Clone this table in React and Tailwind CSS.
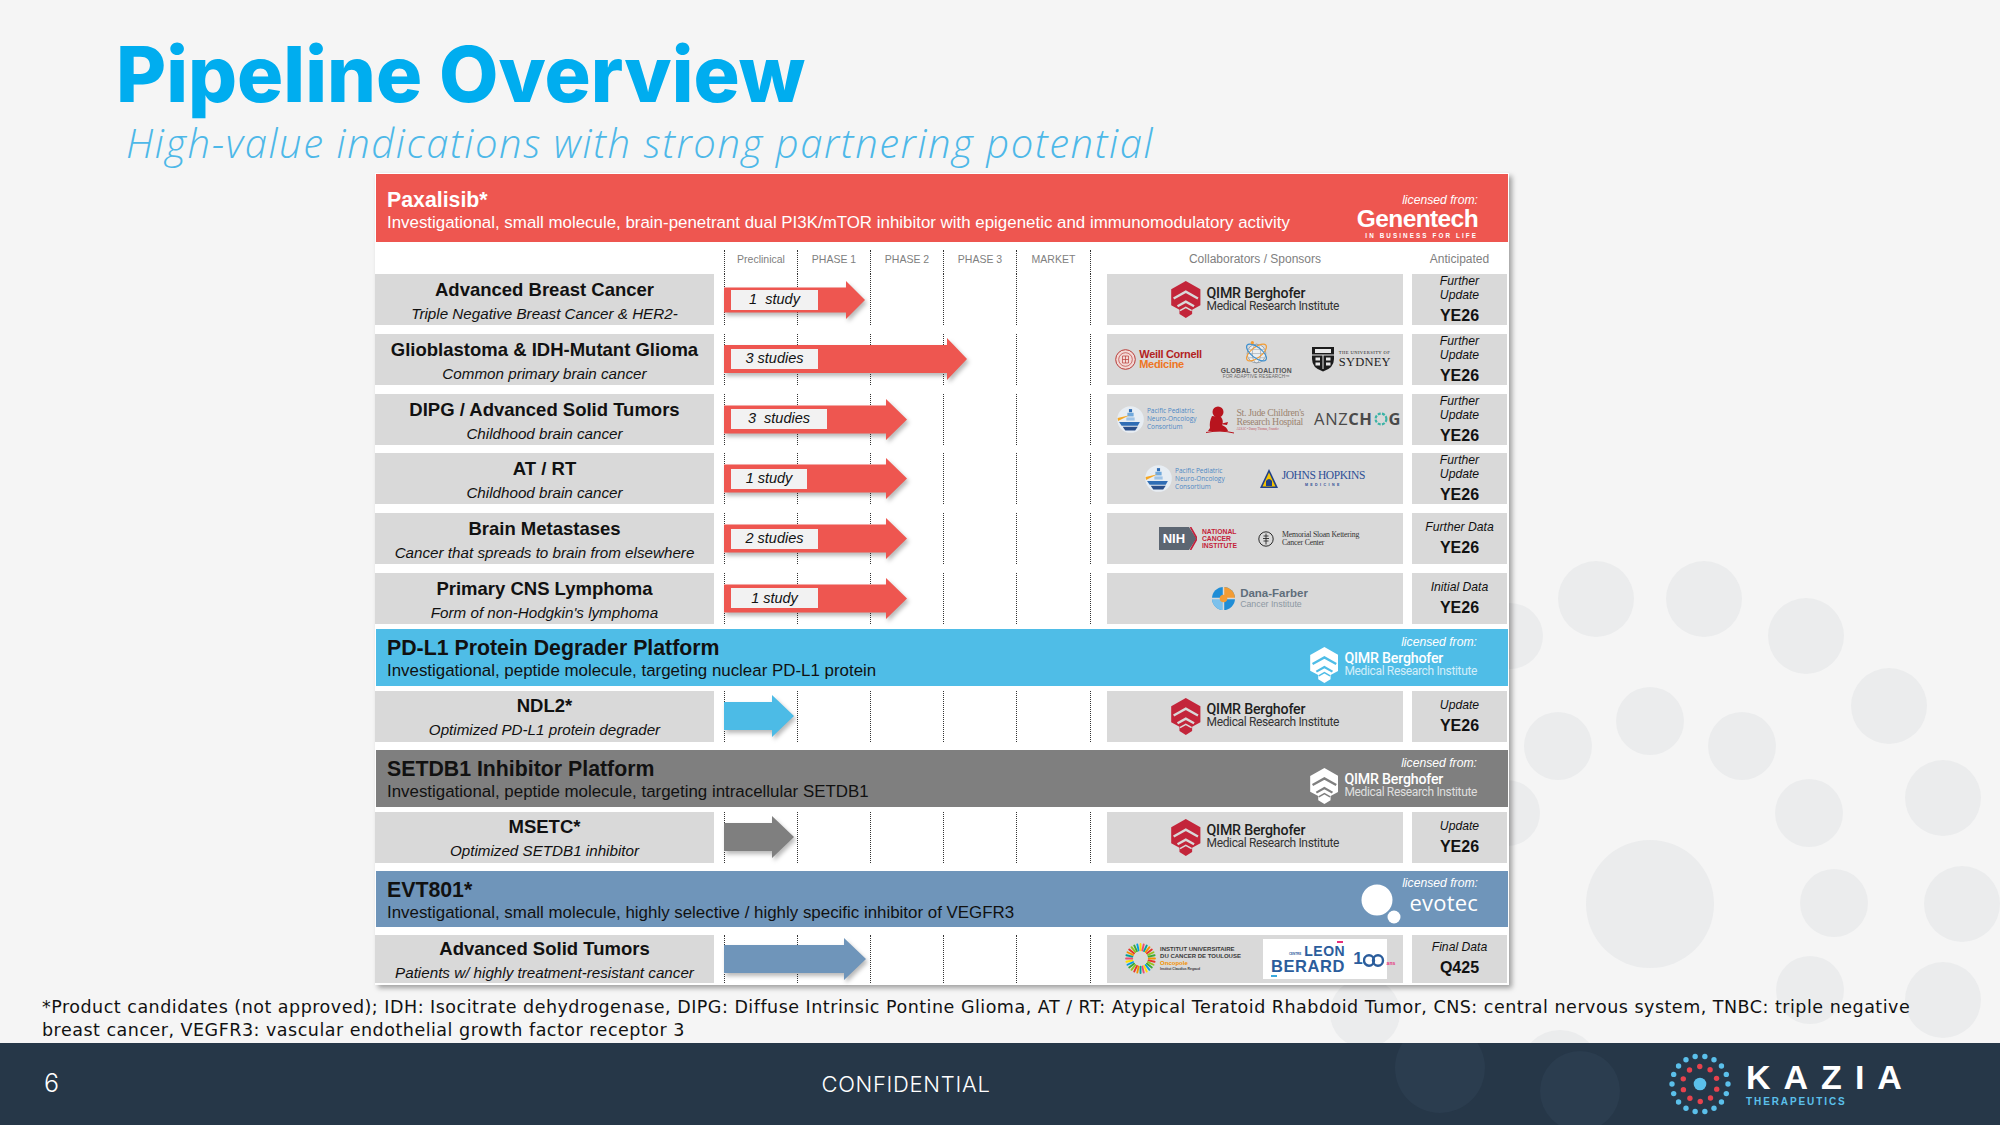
import React from 'react'

const sans = "font-['Liberation_Sans',Arial,sans-serif]"

// faint background circles on the right side of the slide
const dots = [
  'left-[1558px] top-[561px] w-[76px] h-[76px]',
  'left-[1666px] top-[561px] w-[76px] h-[76px]',
  'left-[1768px] top-[598px] w-[76px] h-[76px]',
  'left-[1851px] top-[668px] w-[76px] h-[76px]',
  'left-[1905px] top-[760px] w-[76px] h-[76px]',
  'left-[1924px] top-[866px] w-[76px] h-[76px]',
  'left-[1524px] top-[712px] w-[68px] h-[68px]',
  'left-[1616px] top-[687px] w-[68px] h-[68px]',
  'left-[1708px] top-[712px] w-[68px] h-[68px]',
  'left-[1775px] top-[779px] w-[68px] h-[68px]',
  'left-[1800px] top-[869px] w-[68px] h-[68px]',
  'left-[1586px] top-[840px] w-[128px] h-[128px]',
  'left-[1477px] top-[603px] w-[66px] h-[66px]',
  'left-[1474px] top-[780px] w-[66px] h-[66px]',
  'left-[1776px] top-[956px] w-[68px] h-[68px]',
  'left-[1905px] top-[962px] w-[76px] h-[76px]',
  'left-[1330px] top-[978px] w-[70px] h-[70px]',
  'left-[1520px] top-[1030px] w-[80px] h-[80px]',
]

function QimrIcon({ fill, line, h = 37 }) {
  return (
    <svg width={h * 0.8} height={h} viewBox="0 0 30 38">
      <path d="M15 0 L30 8.5 V25 L21.5 29.5 V34 L15 38 L8.5 34 V29.5 L0 25 V8.5 Z" fill={fill} />
      <path d="M2.5 18 L15 11 L27.5 18" stroke={line} strokeWidth="2.4" fill="none" />
      <path d="M6.5 26 L15 21.2 L23.5 26" stroke={line} strokeWidth="2.4" fill="none" />
      <path d="M9 30.5 L15 27 L21 30.5" stroke={line} strokeWidth="1.6" fill="none" />
    </svg>
  )
}

function QimrLogo({ white, line = '#d9d9d9' }) {
  return (
    <div className="flex items-center gap-[6px]">
      <QimrIcon fill={white ? '#ffffff' : '#c3253a'} line={line} h={white ? 36 : 37} />
      <div className="flex flex-col font-['Roboto',sans-serif] leading-[13px]">
        <span className={`text-[14.2px] font-medium tracking-[-0.2px] ${white ? 'text-white' : 'text-[#1e1e1e]'}`}>QIMR Berghofer</span>
        <span className={`text-[12px] tracking-[-0.35px] ${white ? 'text-white/75' : 'text-[#333]'}`}>Medical Research Institute</span>
      </div>
    </div>
  )
}

function WeillLogo() {
  return (
    <div className="flex items-center gap-[3px]">
      <svg width="21" height="21" viewBox="0 0 21 21">
        <circle cx="10.5" cy="10.5" r="9.8" fill="#f3d9d6" stroke="#b83a36" strokeWidth="1" />
        <circle cx="10.5" cy="10.5" r="6.8" fill="none" stroke="#b83a36" strokeWidth="0.7" />
        <path d="M7.5 7 H13.5 V14 H7.5 Z M10.5 7 V14 M7.5 10.5 H13.5" stroke="#b83a36" strokeWidth="0.7" fill="none" />
      </svg>
      <div className={`flex flex-col ${sans} text-[11px] font-bold leading-[10.5px] tracking-[-0.3px]`}>
        <span className="text-[#b3231f]">Weill Cornell</span>
        <span className="text-[#ee7623]">Medicine</span>
      </div>
    </div>
  )
}

function GlobalLogo() {
  return (
    <div className={`flex flex-col items-center ${sans}`}>
      <svg width="27" height="27" viewBox="0 0 26 26">
        <circle cx="13" cy="14" r="9" fill="#eceef0" stroke="#8f99a3" strokeWidth="0.8" />
        <ellipse cx="13" cy="14" rx="4" ry="9" fill="none" stroke="#8f99a3" strokeWidth="0.6" />
        <path d="M4 14 H22 M5.5 10 H20.5 M5.5 18 H20.5" stroke="#8f99a3" strokeWidth="0.5" />
        <ellipse cx="13" cy="13" rx="11.5" ry="5" transform="rotate(-38 13 13)" fill="none" stroke="#f39c34" strokeWidth="1.1" />
        <ellipse cx="13" cy="13" rx="11.5" ry="5" transform="rotate(38 13 13)" fill="none" stroke="#3b8fd0" strokeWidth="1.1" />
        <circle cx="9" cy="3.5" r="1.6" fill="#f39c34" />
      </svg>
      <span className="mt-[1px] text-[6.8px] font-bold leading-[7px] tracking-[0.2px] text-[#555]">GLOBAL COALITION</span>
      <span className="text-[4.6px] leading-[5px] tracking-[0.1px] text-[#666]">FOR ADAPTIVE RESEARCH™</span>
    </div>
  )
}

function SydneyLogo() {
  return (
    <div className="flex items-center gap-[4px]">
      <svg width="24" height="26" viewBox="0 0 24 26">
        <path d="M1 1 H23 V13 Q23 22 12 25.5 Q1 22 1 13 Z" fill="#1c1c1c" />
        <path d="M4 3 H20 V7 H4 Z" fill="#e8e8e8" />
        <path d="M1 9 H23 M12 9 V23" stroke="#e8e8e8" strokeWidth="1" />
        <rect x="4.5" y="11.5" width="4.5" height="3" fill="#e8e8e8" />
        <rect x="15" y="11.5" width="4.5" height="3" fill="#e8e8e8" />
        <rect x="4.5" y="16.5" width="4.5" height="3" fill="#e8e8e8" />
        <rect x="15" y="16.5" width="4.5" height="3" fill="#e8e8e8" />
      </svg>
      <div className="flex flex-col font-['Liberation_Serif',serif] text-[#222]">
        <span className="text-[4.6px] leading-[6px] tracking-[0.4px]">THE UNIVERSITY OF</span>
        <span className="text-[12.5px] leading-[12px] tracking-[0.2px]">SYDNEY</span>
      </div>
    </div>
  )
}

function PpnocLogo() {
  return (
    <div className="flex items-center gap-[3px]">
      <svg width="27" height="27" viewBox="0 0 26 26">
        <circle cx="13" cy="13" r="12.8" fill="#e7edf3" />
        <path d="M11.5 3 H14.5 V6 H11.5 Z" fill="#2f6db5" />
        <path d="M10 6.5 H16 V10 H10 Z" fill="#6fa8dc" />
        <path d="M12 9 L0.6 11.5 L1 14.5 Z" fill="#f5a623" />
        <path d="M9 11 H17 V14 H9 Z" fill="#9fc3e6" />
        <path d="M2 15.5 H22 L20 19 H4.5 Z" fill="#2f6db5" />
        <path d="M5.5 20 H20 L17.5 23.5 H8 Z" fill="#2a4f8a" />
      </svg>
      <div className="flex flex-col font-['Open_Sans',sans-serif] text-[6.5px] leading-[7.8px] text-[#4d88c4]">
        <span>Pacific Pediatric</span>
        <span>Neuro-Oncology</span>
        <span>Consortium</span>
      </div>
    </div>
  )
}

function StJudeLogo() {
  return (
    <div className="flex items-center">
      <svg width="30" height="30" viewBox="0 0 30 30">
        <circle cx="12" cy="8" r="5.5" fill="#b8141e" />
        <path d="M6 12 Q3 18 4 24 L2 27 H22 Q21 23 16 21 Q18 17 15 13 Z" fill="#b8141e" />
        <path d="M14 20 L22 18 L21 21 Z" fill="#b8141e" />
        <path d="M0 28.5 Q14 25.5 28 29" stroke="#b8141e" strokeWidth="1" fill="none" />
      </svg>
      <div className="flex flex-col font-['Liberation_Serif',serif] text-[#9b8470]">
        <span className="text-[9.8px] leading-[9px] tracking-[-0.3px]">St. Jude Children's</span>
        <span className="text-[9.8px] leading-[9px] tracking-[-0.3px]">Research Hospital</span>
        <span className="mt-[1px] text-[3px] leading-[4px] text-[#c0505a]">ALSAC • Danny Thomas, Founder</span>
      </div>
    </div>
  )
}

function AnzchogLogo() {
  return (
    <div className="flex items-center font-['Open_Sans',sans-serif] text-[16.5px] leading-none tracking-[0.6px] text-[#4a4a4a]">
      <span>ANZ</span>
      <span className="font-bold">CH</span>
      <svg width="14" height="14" viewBox="0 0 14 14" className="mx-[1px]">
        <circle cx="7" cy="7" r="5.4" fill="none" stroke="#3bb3a6" strokeWidth="2.2" strokeDasharray="3 1.3" />
      </svg>
      <span className="font-bold">G</span>
    </div>
  )
}

function HopkinsLogo() {
  return (
    <div className="flex items-center gap-[3px]">
      <svg width="20" height="22" viewBox="0 0 20 22">
        <path d="M10 1 L19 20 H1 Z" fill="#1f3f87" />
        <path d="M10 4.5 L16.5 18.5 H3.5 Z" fill="#f4c300" />
        <path d="M7 18 V13 Q10 9 13 13 V18 Z" fill="#1f3f87" />
      </svg>
      <div className="flex flex-col items-center font-['Liberation_Serif',serif] text-[#2c4f96]">
        <span className="text-[11.5px] leading-[11px] tracking-[-0.4px]">JOHNS HOPKINS</span>
        <span className={`${sans} mt-[2px] text-[3.6px] font-bold leading-[4px] tracking-[2.4px]`}>MEDICINE</span>
      </div>
    </div>
  )
}

function NihLogo() {
  return (
    <div className="flex items-center gap-[5px]">
      <div className="flex h-[23px] items-center">
        <div className={`flex h-[23px] w-[30px] items-center justify-center bg-[#5c6672] ${sans} text-[13px] font-bold text-white`}>NIH</div>
        <svg width="8" height="23" viewBox="0 0 8 23">
          <path d="M0 0 L7.5 11.5 L0 23 Z" fill="#5c6672" />
          <path d="M1.5 0 L8 11.5 L1.5 23" stroke="#c41e3a" strokeWidth="1.6" fill="none" />
        </svg>
      </div>
      <div className={`flex flex-col ${sans} text-[6.8px] font-bold leading-[7.4px] text-[#c41e3a]`}>
        <span>NATIONAL</span>
        <span>CANCER</span>
        <span>INSTITUTE</span>
      </div>
    </div>
  )
}

function MskLogo() {
  return (
    <div className="flex items-center gap-[8px]">
      <svg width="16" height="16" viewBox="0 0 16 16">
        <circle cx="8" cy="8" r="7.2" fill="none" stroke="#2a2a2a" strokeWidth="1" />
        <path d="M8 2.5 V13.5 M5.5 5 H10.5 M5 7.5 H11 M5.5 10 H10.5" stroke="#2a2a2a" strokeWidth="0.9" />
      </svg>
      <div className="flex flex-col font-['Liberation_Serif',serif] text-[7.8px] leading-[8px] tracking-[-0.2px] text-[#333]">
        <span>Memorial Sloan Kettering</span>
        <span>Cancer Center</span>
      </div>
    </div>
  )
}

function DanaLogo() {
  return (
    <div className="ml-[10px] flex items-center gap-[5px]">
      <svg width="23" height="23" viewBox="0 0 22 22">
        <circle cx="11" cy="11" r="11" fill="#1f8dd6" />
        <path d="M11 0 A11 11 0 0 1 22 11 H11 Z" fill="#f39c34" />
        <path d="M11 11 H0 A11 11 0 0 0 11 22 Z" fill="#7cc1ec" />
        <path d="M11 0 V22 M0 11 H22" stroke="#d9d9d9" strokeWidth="1.4" />
        <circle cx="11" cy="11" r="3.6" fill="#f39c34" />
      </svg>
      <div className={`flex flex-col ${sans} text-[#5f6e7b]`}>
        <span className="text-[11.5px] font-bold leading-[11px]">Dana-Farber</span>
        <span className="text-[8.8px] leading-[10px] text-[#8c98a3]">Cancer Institute</span>
      </div>
    </div>
  )
}

function IuctLogo() {
  const colors = ['#f39200', '#e6332a', '#95c11f', '#3aaa35', '#009fe3', '#ffde00', '#e94e77', '#00a19a']
  const ticks = Array.from({ length: 28 }, (_, i) => i)
  return (
    <div className="flex items-center gap-[4px]">
      <svg width="31" height="31" viewBox="0 0 30 30">
        {ticks.map((i) => {
          const a = (i / 28) * Math.PI * 2
          return (
            <line
              key={i}
              x1={15 + Math.cos(a) * 8}
              y1={15 + Math.sin(a) * 8}
              x2={15 + Math.cos(a) * 14}
              y2={15 + Math.sin(a) * 14}
              stroke={colors[i % colors.length]}
              strokeWidth="1.8"
              strokeLinecap="round"
            />
          )
        })}
      </svg>
      <div className={`flex flex-col ${sans} font-bold text-[#3a3a3a]`}>
        <span className="text-[6px] leading-[7px]">INSTITUT UNIVERSITAIRE</span>
        <span className="text-[6px] leading-[7px]">DU CANCER DE TOULOUSE</span>
        <span className="text-[6px] leading-[7px] text-[#f39200]">Oncopole</span>
        <span className="text-[3.4px] leading-[4px]">Institut Claudius Regaud</span>
      </div>
    </div>
  )
}

function BerardLogo() {
  return (
    <div className={`flex h-[40px] w-[124px] items-center bg-white pl-[8px] ${sans}`}>
      <div className="relative flex flex-col items-end font-bold text-[#2b5d9c]">
        <div className="flex items-end gap-[3px]">
          <span className="mb-[2px] text-[3px] leading-[3px]">CENTRE</span>
          <span className="text-[14px] leading-[14px] tracking-[0.5px]">LEON</span>
        </div>
        <span className="text-[16.5px] leading-[16px] tracking-[0.6px]">BERARD</span>
        <span className="absolute right-[2px] -top-[3px] h-[2px] w-[6px] bg-[#e5317c]" />
        <span className="absolute left-0 -bottom-[3px] h-[2px] w-[6px] bg-[#3aa9dd]" />
      </div>
      <div className="ml-[8px] flex items-end text-[#2b5d9c]">
        <span className="text-[17px] font-bold leading-[17px]">1</span>
        <svg width="24" height="13" viewBox="0 0 24 13">
          <ellipse cx="6" cy="6.5" rx="5" ry="5.2" fill="none" stroke="#2b5d9c" strokeWidth="2.4" />
          <ellipse cx="15" cy="6.5" rx="5" ry="5.2" fill="none" stroke="#2b5d9c" strokeWidth="2.4" />
        </svg>
        <span className="mb-[1px] text-[5px] font-bold leading-[5px] text-[#e5317c]">ans</span>
      </div>
    </div>
  )
}

function Arrow({ w, h = 41, body = 28, head = 21, color, label, lw }) {
  const t = (h - body) / 2
  const pts = `0,${t} ${w - head},${t} ${w - head},0 ${w},${h / 2} ${w - head},${h} ${w - head},${h - t} 0,${h - t}`
  return (
    <div className="relative" style={{ width: w, height: h }}>
      <svg width={w} height={h} viewBox={`0 0 ${w} ${h}`} className="drop-shadow-[2px_3px_2px_rgba(0,0,0,0.28)]">
        <polygon points={pts} fill={color} />
      </svg>
      {label && (
        <div className={`absolute left-[7px] top-1/2 flex h-[20px] -translate-y-1/2 items-center justify-center bg-[#f2f2f2] ${lw} ${sans} text-[14.5px] italic whitespace-pre text-[#111]`}>
          {label}
        </div>
      )}
    </div>
  )
}

function PhaseCells({ children }) {
  return (
    <div className="relative ml-[10px] flex w-[367px] self-stretch">
      <div className="w-[73px] border-l border-dotted border-[#333]" />
      <div className="w-[73px] border-l border-dotted border-[#333]" />
      <div className="w-[73px] border-l border-dotted border-[#333]" />
      <div className="w-[73px] border-l border-dotted border-[#333]" />
      <div className="w-[75px] border-x border-dotted border-[#333]" />
      {children}
    </div>
  )
}

function Label({ title, sub, h = 'h-[51px]', pt = 'pt-[4px]' }) {
  return (
    <div className={`flex w-[339px] shrink-0 flex-col items-center bg-[#d9d9d9] ${h} ${pt} ${sans} text-[#111]`}>
      <span className="text-[18.5px] font-bold leading-[23px]">{title}</span>
      <span className="text-[15.2px] italic leading-[25px]">{sub}</span>
    </div>
  )
}

function Anticipated({ lines, value, h = 'h-[51px]' }) {
  return (
    <div className={`ml-[9px] flex w-[95px] shrink-0 flex-col items-center justify-center bg-[#d9d9d9] ${h} ${sans} text-[#111]`}>
      {lines.map((l) => (
        <span key={l} className="text-[12.2px] italic leading-[14px]">{l}</span>
      ))}
      <span className="mt-[5px] text-[16px] font-bold leading-[18px]">{value}</span>
    </div>
  )
}

function Collab({ children, h = 'h-[51px]' }) {
  return (
    <div className={`ml-[16px] flex w-[296px] shrink-0 items-center justify-center bg-[#d9d9d9] ${h}`}>
      {children}
    </div>
  )
}

const red = '#ee5650'

const paxRows = [
  {
    title: 'Advanced Breast Cancer', sub: 'Triple Negative Breast Cancer & HER2-',
    arrow: { w: 141, h: 38, body: 25, head: 19, label: '1  study', lw: 'w-[87px]' },
    collab: <QimrLogo />, ant: ['Further', 'Update'],
  },
  {
    title: 'Glioblastoma & IDH-Mutant Glioma', sub: 'Common primary brain cancer',
    arrow: { w: 243, h: 42, body: 28, head: 20, label: '3 studies', lw: 'w-[87px]' },
    collab: (
      <div className="flex items-center gap-[19px] pr-[4px]">
        <WeillLogo />
        <GlobalLogo />
        <SydneyLogo />
      </div>
    ),
    ant: ['Further', 'Update'],
  },
  {
    title: 'DIPG / Advanced Solid Tumors', sub: 'Childhood brain cancer',
    arrow: { w: 183, label: '3  studies', lw: 'w-[96px]' },
    collab: (
      <div className="flex items-center gap-[10px] pl-[8px]">
        <PpnocLogo />
        <StJudeLogo />
        <AnzchogLogo />
      </div>
    ),
    ant: ['Further', 'Update'],
  },
  {
    title: 'AT / RT', sub: 'Childhood brain cancer',
    arrow: { w: 183, label: '1 study', lw: 'w-[76px]' },
    collab: (
      <div className="flex items-center gap-[34px]">
        <PpnocLogo />
        <HopkinsLogo />
      </div>
    ),
    ant: ['Further', 'Update'],
  },
  {
    title: 'Brain Metastases', sub: 'Cancer that spreads to brain from elsewhere',
    arrow: { w: 183, label: '2 studies', lw: 'w-[87px]' },
    collab: (
      <div className="flex items-center gap-[21px] pl-[8px]">
        <NihLogo />
        <MskLogo />
      </div>
    ),
    ant: ['Further Data'],
  },
  {
    title: 'Primary CNS Lymphoma', sub: "Form of non-Hodgkin's lymphoma",
    arrow: { w: 183, label: '1 study', lw: 'w-[87px]' },
    collab: <DanaLogo />, ant: ['Initial Data'],
  },
]

function Licensed() {
  return <span className={`${sans} text-[12.2px] italic leading-[16px] text-white`}>licensed from:</span>
}

function Bar({ color, title, sub, right, h }) {
  return (
    <div className={`mx-[1px] flex justify-between ${color} ${h} ${sans} text-[#111]`}>
      <div className="flex flex-col pl-[11px] pt-[7px]">
        <span className="text-[21.3px] font-bold leading-[24px]">{title}</span>
        <span className="text-[16.9px] leading-[22px]">{sub}</span>
      </div>
      {right}
    </div>
  )
}

function SubRow({ title, sub, color, w, collab, ant, value, h = 'h-[51px]', pt = 'pt-[3px]', head = 22 }) {
  return (
    <div className="flex">
      <Label title={title} sub={sub} h={h} pt={pt} />
      <PhaseCells>
        <div className="absolute left-0 top-0 flex h-full items-center">
          <Arrow w={w} h={42} body={28} head={head} color={color} />
        </div>
      </PhaseCells>
      <Collab h={h}>{collab}</Collab>
      <Anticipated lines={ant} value={value} h={h} />
    </div>
  )
}

function KaziaMark() {
  const outer = Array.from({ length: 18 }, (_, i) => (i / 18) * Math.PI * 2)
  const inner = Array.from({ length: 10 }, (_, i) => (i / 10) * Math.PI * 2 + 0.3)
  return (
    <svg width="64" height="64" viewBox="0 0 64 64">
      {outer.map((a, i) => (
        <circle key={'o' + i} cx={32 + Math.cos(a) * 28} cy={32 + Math.sin(a) * 28} r="2.7" fill="#5bc0eb" />
      ))}
      {inner.map((a, i) => (
        <circle key={'i' + i} cx={32 + Math.cos(a) * 17.5} cy={32 + Math.sin(a) * 17.5} r="2.7" fill="#e8424d" />
      ))}
      <circle cx="32" cy="32" r="6.3" fill="#5bc0eb" />
    </svg>
  )
}

export default function App() {
  return (
    <div className="relative flex h-[1125px] w-[2000px] flex-col overflow-hidden bg-[#f5f5f5]">
      {dots.map((d) => (
        <div key={d} className={`absolute rounded-full bg-[#ebeced] ${d}`} />
      ))}

      {/* title */}
      <div className="relative h-[173px] pl-[116px] pt-[36px]">
        <h1 className="font-['Inter',sans-serif] text-[77px] font-extrabold leading-[77px] text-[#00adef]">
          Pipeline Overview
        </h1>
        <p className="mt-[10px] pl-[10px] font-['Open_Sans',sans-serif] text-[40px] font-light italic leading-[40px] tracking-[1.6px] text-[#4db8e8]">
          High-value indications with strong partnering potential
        </p>
      </div>

      {/* pipeline table */}
      <div className="relative ml-[375px] w-[1134px] bg-white pt-[1px] pb-[2px] shadow-[3px_3px_5px_rgba(0,0,0,0.35)]">
        <div className={`mx-[1px] flex h-[68px] justify-between bg-[#ee5650] ${sans} text-white`}>
          <div className="flex flex-col pl-[11px] pt-[14px]">
            <span className="text-[21.3px] font-bold leading-[24px]">Paxalisib*</span>
            <span className="text-[16.9px] leading-[22px]">
              Investigational, small molecule, brain-penetrant dual PI3K/mTOR inhibitor with epigenetic and immunomodulatory activity
            </span>
          </div>
          <div className="flex flex-col items-end pr-[30px] pt-[18px]">
            <Licensed />
            <span className="text-[24.5px] font-bold leading-[22px] tracking-[-0.6px]">Genentech</span>
            <span className="mt-[2px] text-[6.3px] font-bold leading-[8px] tracking-[2.1px]">IN BUSINESS FOR LIFE</span>
          </div>
        </div>

        {/* column headers */}
        <div className={`flex h-[32px] ${sans} text-[#808080]`}>
          <div className="w-[339px] shrink-0" />
          <div className="ml-[10px] mt-[8px] flex w-[367px] text-[10.5px] leading-[14px]">
            <div className="w-[73px] border-l border-dotted border-[#333] pt-[2px] text-center">Preclinical</div>
            <div className="w-[73px] border-l border-dotted border-[#333] pt-[2px] text-center">PHASE 1</div>
            <div className="w-[73px] border-l border-dotted border-[#333] pt-[2px] text-center">PHASE 2</div>
            <div className="w-[73px] border-l border-dotted border-[#333] pt-[2px] text-center">PHASE 3</div>
            <div className="w-[75px] border-x border-dotted border-[#333] pt-[2px] text-center">MARKET</div>
          </div>
          <div className="ml-[16px] w-[296px] pt-[10px] text-center text-[12px] leading-[14px]">Collaborators / Sponsors</div>
          <div className="ml-[9px] w-[95px] pt-[10px] text-center text-[12px] leading-[14px]">Anticipated</div>
        </div>

        {paxRows.map((r, i) => (
          <div key={r.title} className={`flex items-start ${i < 5 ? 'pb-[8.8px]' : 'pb-[5px]'}`}>
            <Label title={r.title} sub={r.sub} />
            <PhaseCells>
              <div className="absolute left-0 top-0 flex h-[51px] items-center">
                <Arrow color={red} {...r.arrow} />
              </div>
            </PhaseCells>
            <Collab>{r.collab}</Collab>
            <Anticipated lines={r.ant} value="YE26" />
          </div>
        ))}

        {/* PD-L1 */}
        <Bar
          color="bg-[#4fbde7]"
          h="h-[57px]"
          title="PD-L1 Protein Degrader Platform"
          sub="Investigational, peptide molecule, targeting nuclear PD-L1 protein"
          right={
            <div className="flex flex-col items-end pr-[31px] pt-[5px]">
              <Licensed />
              <div className="-mt-[3px]">
                <QimrLogo white line="#4fbde7" />
              </div>
            </div>
          }
        />
        <div className="mt-[5px]">
          <SubRow
            title="NDL2*"
            sub="Optimized PD-L1 protein degrader"
            color="#4cbbe6"
            w={70}
            collab={<QimrLogo />}
            ant={['Update']}
            value="YE26"
          />
        </div>

        {/* SETDB1 */}
        <div className="mt-[8px]">
          <Bar
            color="bg-[#7f7f7f]"
            h="h-[57px]"
            title="SETDB1 Inhibitor Platform"
            sub="Investigational, peptide molecule, targeting intracellular SETDB1"
            right={
              <div className="flex flex-col items-end pr-[31px] pt-[5px]">
                <Licensed />
                <div className="-mt-[3px]">
                  <QimrLogo white line="#7f7f7f" />
                </div>
              </div>
            }
          />
        </div>
        <div className="mt-[5px]">
          <SubRow
            title="MSETC*"
            sub="Optimized SETDB1 inhibitor"
            color="#7f7f7f"
            w={70}
            collab={<QimrLogo />}
            ant={['Update']}
            value="YE26"
          />
        </div>

        {/* EVT801 */}
        <div className="mt-[8px]">
          <Bar
            color="bg-[#6f95ba]"
            h="h-[56px]"
            title="EVT801*"
            sub="Investigational, small molecule, highly selective / highly specific inhibitor of VEGFR3"
            right={
              <div className="flex flex-col items-end pr-[30px] pt-[4px]">
                <Licensed />
                <div className="-mt-[7px] flex items-center gap-[8px]">
                  <svg width="40" height="40" viewBox="0 0 40 40">
                    <circle cx="16" cy="16" r="15.5" fill="#fff" />
                    <circle cx="33" cy="33" r="6.5" fill="#fff" />
                  </svg>
                  <span className="-mt-[4px] font-['Open_Sans',sans-serif] text-[22px] leading-[22px] tracking-[0.2px] text-white">evotec</span>
                </div>
              </div>
            }
          />
        </div>
        <div className="mt-[8px]">
          <SubRow
            title="Advanced Solid Tumors"
            sub="Patients w/ highly treatment-resistant cancer"
            color="#6f95ba"
            w={142}
            h="h-[48px]"
            pt="pt-[2px]"
            collab={
              <div className="flex items-center gap-[22px] pl-[2px]">
                <IuctLogo />
                <BerardLogo />
              </div>
            }
            ant={['Final Data']}
            value="Q425"
          />
        </div>
      </div>

      {/* footnote */}
      <p className="relative ml-[42px] mt-[11px] whitespace-nowrap font-['DejaVu_Sans',sans-serif] text-[17.5px] leading-[23px] tracking-[0.5px] text-[#111]">
        *Product candidates (not approved); IDH: Isocitrate dehydrogenase, DIPG: Diffuse Intrinsic Pontine Glioma, AT / RT: Atypical Teratoid Rhabdoid Tumor, CNS: central nervous system, TNBC: triple negative
        <br />
        breast cancer, VEGFR3: vascular endothelial growth factor receptor 3
      </p>

      {/* footer */}
      <div className="relative mt-auto flex h-[82px] items-center overflow-hidden bg-[#263748] font-['Inter',sans-serif] text-white">
        <div className="absolute left-[1395px] -top-[20px] h-[90px] w-[90px] rounded-full bg-[#2b3d4f]" />
        <div className="absolute left-[1540px] top-[8px] h-[80px] w-[80px] rounded-full bg-[#2b3d4f]" />
        <div className="relative w-[778px] pl-[44px] text-[25px] font-light">6</div>
        <div className="relative w-[256px] text-center text-[22px] font-light tracking-[0.7px]">CONFIDENTIAL</div>
        <div className="relative ml-[634px] flex items-center">
          <KaziaMark />
          <div className="ml-[14px] flex flex-col">
            <span className={`${sans} text-[34px] font-bold leading-[30px] tracking-[13px]`}>KAZIA</span>
            <span className={`${sans} mt-[5px] text-[10px] font-bold leading-[10px] tracking-[1.9px] text-[#5bc0eb]`}>THERAPEUTICS</span>
          </div>
        </div>
      </div>
    </div>
  )
}
